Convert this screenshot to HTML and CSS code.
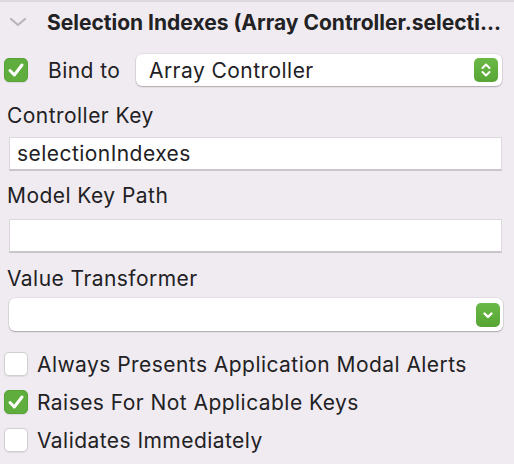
FILE: index.html
```html
<!DOCTYPE html>
<html>
<head>
<meta charset="utf-8">
<link rel="stylesheet" href="styles.css">
</head>
<body>
<div class="panel">
  <div class="topline"></div>
  <div class="header">
    <svg class="disclosure" width="18" height="10" viewBox="0 0 18 10"><path d="M2 2 L9 8 L16 2" fill="none" stroke="#b9b4bb" stroke-width="2.2" stroke-linecap="round" stroke-linejoin="round"/></svg>
    <span class="title">Selection Indexes (Array Controller.selecti...</span>
  </div>
  <div class="bind-row">
    <span class="check on"><svg width="24" height="24" viewBox="0 0 24 24"><path d="M6 12.5 L10.3 17 L18 7" fill="none" stroke="#fff" stroke-width="3" stroke-linecap="round" stroke-linejoin="round"/></svg></span>
    <span class="bind-label">Bind to</span>
    <div class="popup">
      <span class="popup-text">Array Controller</span>
      <span class="btn"><svg width="24" height="24" viewBox="0 0 24 24"><path d="M8.5 10 L12 6.5 L15.5 10 M8.5 14 L12 17.5 L15.5 14" fill="none" stroke="#fff" stroke-width="2" stroke-linecap="round" stroke-linejoin="round"/></svg></span>
    </div>
  </div>
  <div class="field-label l1">Controller Key</div>
  <div class="textfield t1">selectionIndexes</div>
  <div class="field-label l2">Model Key Path</div>
  <div class="textfield t2"></div>
  <div class="field-label l3">Value Transformer</div>
  <div class="combo">
    <span class="btn"><svg width="24" height="24" viewBox="0 0 24 24"><path d="M8.5 10.5 L12 14 L15.5 10.5" fill="none" stroke="#fff" stroke-width="2.4" stroke-linecap="round" stroke-linejoin="round"/></svg></span>
  </div>
  <div class="options">
    <div class="option"><span class="check"></span><span>Always Presents Application Modal Alerts</span></div>
    <div class="option"><span class="check on"><svg width="24" height="24" viewBox="0 0 24 24"><path d="M6 12.5 L10.3 17 L18 7" fill="none" stroke="#fff" stroke-width="3" stroke-linecap="round" stroke-linejoin="round"/></svg></span><span>Raises For Not Applicable Keys</span></div>
    <div class="option"><span class="check"></span><span>Validates Immediately</span></div>
  </div>
</div>
</body>
</html>
```
FILE: styles.css
```css
html, body {
  margin: 0;
  padding: 0;
  background: #f0ebf1;
}
.panel {
  width: 514px;
  height: 464px;
  font-family: Inter, "Liberation Sans", sans-serif;
  font-size: 21px;
  letter-spacing: 0.45px;
  color: #222124;
  overflow: hidden;
}
.topline {
  height: 2px;
  background: #dcd8de;
}
.header {
  display: flex;
  align-items: center;
  height: 40px;
  padding-left: 9px;
}
.disclosure {
  flex: none;
}
.title {
  margin-left: 20px;
  font-weight: 700;
  font-size: 21px;
  letter-spacing: 0;
  white-space: nowrap;
}
.bind-row {
  display: flex;
  align-items: center;
  height: 32px;
  margin-top: 12px;
  padding-left: 4px;
}
.check {
  flex: none;
  width: 24px;
  height: 24px;
  box-sizing: border-box;
  border-radius: 5px;
  background: #fff;
  border: 1px solid #d3cfd5;
  box-shadow: 0 0.5px 1px rgba(0,0,0,0.08);
  display: flex;
}
.check.on {
  background: #5fae3d;
  border-color: #58a238;
}
.check svg {
  margin: -1px;
}
.bind-label {
  margin-left: 20px;
  width: 88px;
}
.popup {
  flex: none;
  width: 366px;
  height: 32px;
  box-sizing: border-box;
  background: #fff;
  border-radius: 6px;
  box-shadow: 0 0 0 0.5px rgba(0,0,0,0.1), 0 1px 1.5px rgba(0,0,0,0.25);
  display: flex;
  align-items: center;
  padding-left: 13px;
  padding-right: 4px;
}
.popup-text {
  flex: 1;
}
.btn {
  flex: none;
  width: 24px;
  height: 24px;
  border-radius: 5px;
  background: linear-gradient(#6ab845, #57a535);
  display: flex;
}
.field-label {
  padding-left: 7px;
  line-height: 24px;
}
.l1 { margin-top: 18px; }
.l2 { margin-top: 13px; }
.l3 { margin-top: 14px; }
.textfield {
  margin-left: 9px;
  width: 493px;
  height: 34px;
  box-sizing: border-box;
  background: #fff;
  border: 1px solid #dcd8de;
  border-bottom: 2px solid #c9c5cb;
  padding-left: 7px;
  line-height: 31px;
}
.t1 { margin-top: 9px; }
.t2 { margin-top: 11px; }
.combo {
  margin: 7px 0 0 9px;
  width: 494px;
  height: 33px;
  box-sizing: border-box;
  background: #fff;
  border-radius: 6px;
  box-shadow: 0 0 0 0.5px rgba(0,0,0,0.1), 0 1px 1.5px rgba(0,0,0,0.25);
  display: flex;
  align-items: center;
  justify-content: flex-end;
  padding-right: 3px;
}
.options {
  margin-top: 21px;
  padding-left: 4px;
  display: flex;
  flex-direction: column;
  gap: 14px;
}
.option {
  display: flex;
  align-items: center;
  height: 24px;
  gap: 9px;
}
```
